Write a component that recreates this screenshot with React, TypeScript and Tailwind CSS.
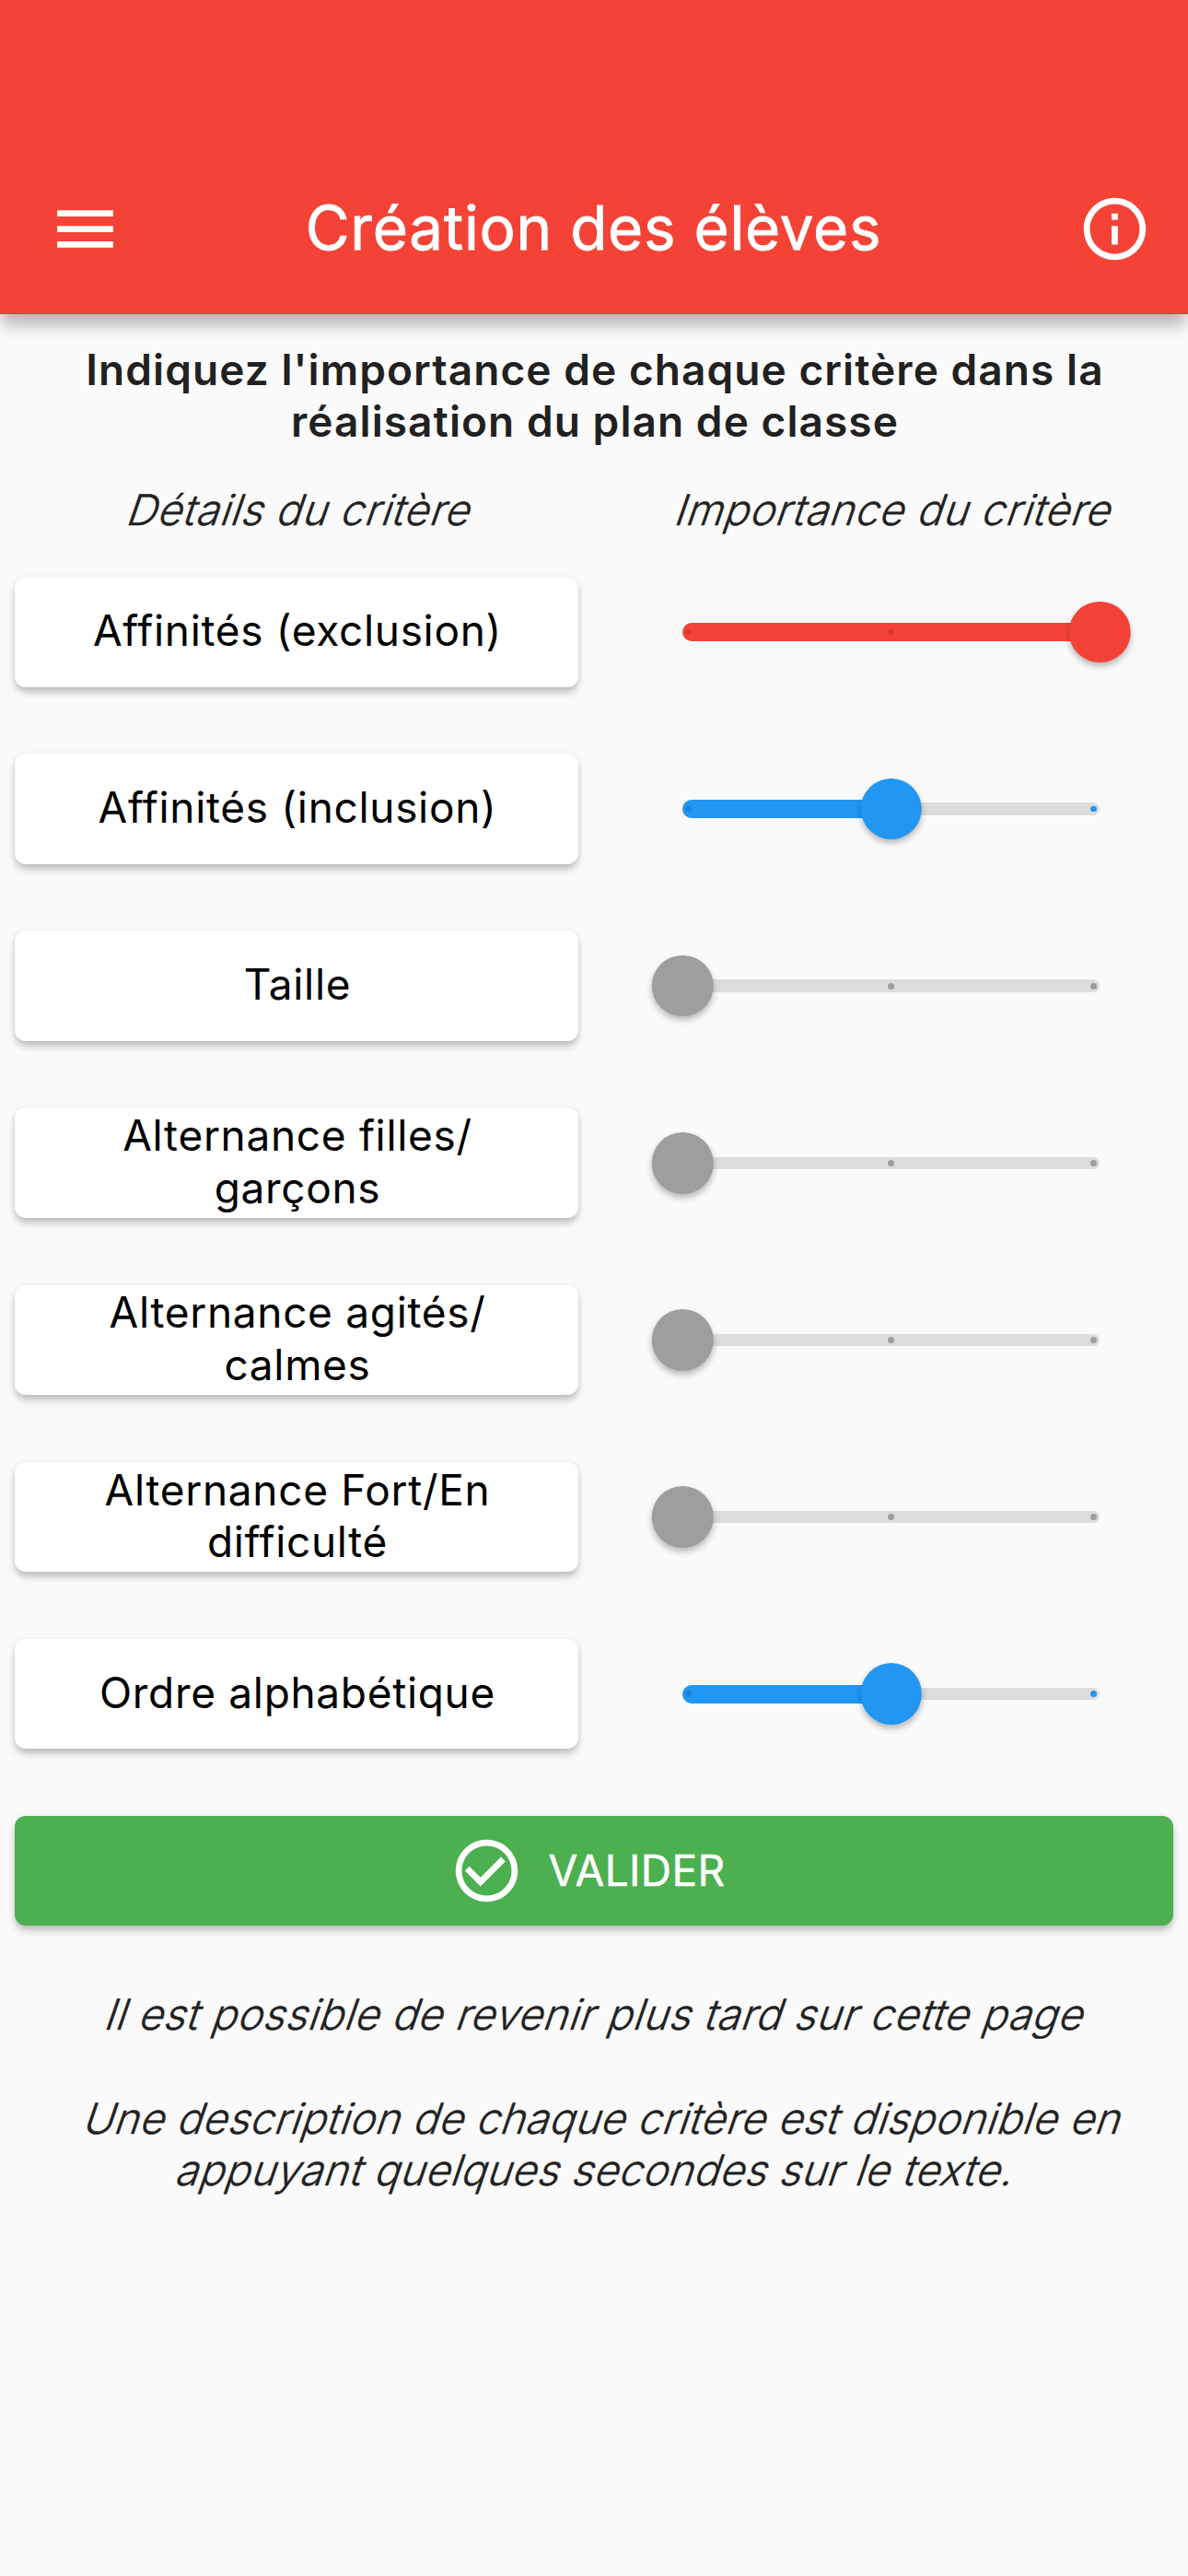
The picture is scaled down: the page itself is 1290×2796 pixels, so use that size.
import React from "react";

type Tone = "red" | "blue" | "grey";

interface Criterion {
  lines: string[];
  value: 0 | 1 | 2;
}

const criteria: Criterion[] = [
  { lines: ["Affinités (exclusion)"], value: 2 },
  { lines: ["Affinités (inclusion)"], value: 1 },
  { lines: ["Taille"], value: 0 },
  { lines: ["Alternance filles/", "garçons"], value: 0 },
  { lines: ["Alternance agités/", "calmes"], value: 0 },
  { lines: ["Alternance Fort/En", "difficulté"], value: 0 },
  { lines: ["Ordre alphabétique"], value: 1 },
];

const toneByValue: Record<number, Tone> = { 0: "grey", 1: "blue", 2: "red" };

const toneClass: Record<Tone, string> = {
  red: "bg-[#f44336]",
  blue: "bg-[#2196f3]",
  grey: "bg-[#9e9e9e]",
};

function MenuIcon() {
  return (
    <svg viewBox="0 0 24 24" className="size-[81px] fill-white">
      <path d="M3 18h18v-2H3v2zm0-5h18v-2H3v2zm0-7v2h18V6H3z" />
    </svg>
  );
}

function InfoIcon() {
  return (
    <svg viewBox="0 0 24 24" className="size-[81px] fill-white">
      <path d="M11 7h2v2h-2zm0 4h2v6h-2zm1-9C6.48 2 2 6.48 2 12s4.48 10 10 10 10-4.48 10-10S17.52 2 12 2zm0 18c-4.41 0-8-3.59-8-8s3.59-8 8-8 8 3.59 8 8-3.59 8-8 8z" />
    </svg>
  );
}

function CheckIcon() {
  return (
    <svg viewBox="0 0 24 24" className="size-[81px] fill-white">
      <path d="M16.59 7.58L10 14.17l-3.59-3.58L5 12l5 5 8-8zM12 2C6.48 2 2 6.48 2 12s4.48 10 10 10 10-4.48 10-10S17.52 2 12 2zm0 18c-4.42 0-8-3.58-8-8s3.58-8 8-8 8 3.58 8 8-3.58 8-8 8z" />
    </svg>
  );
}

/** One line of slanted text. */
function Slanted({ children }: { children: React.ReactNode }) {
  return (
    <span className="block h-[56.4px] -skew-x-[19deg] text-center text-[46px] leading-[56.4px] font-light whitespace-nowrap text-[#212121] [-webkit-text-stroke:0.4px_#212121] [font-feature-settings:'calt'_0]">
      {children}
    </span>
  );
}

function Slider({ value }: { value: number }) {
  const tone = toneClass[toneByValue[value]];
  const percent = value * 50;
  const tick = (index: number) =>
    index < value ? "bg-black/12" : tone;
  return (
    <div className="relative flex h-[68px] w-[453px] items-center">
      <div className="h-[13.5px] w-full rounded-full bg-[#dcdcdc]" />
      {value > 0 && (
        <div
          className={"absolute left-0 h-[20px] rounded-l-full " + tone}
          style={{ width: percent + "%" }}
        />
      )}
      <div className="absolute inset-x-[3.4px] flex justify-between">
        {[0, 1, 2].map((i) => (
          <span key={i} className={"size-[6.75px] rounded-full " + tick(i)} />
        ))}
      </div>
      <div
        className={
          "absolute size-[66.5px] -translate-x-1/2 rounded-full shadow-[0_4px_7px_rgba(0,0,0,0.28)] " + tone
        }
        style={{ left: percent + "%" }}
      />
    </div>
  );
}

export default function App() {
  return (
    <div className="flex h-[2796px] w-[1290px] flex-col overflow-hidden bg-[#fafafa] font-['Inter',sans-serif] [font-variant-ligatures:none]">
      <header className="z-10 flex h-[341px] shrink-0 items-end bg-[#f44336] pb-[52px] shadow-[0_14px_16px_-2px_rgba(0,0,0,0.27)]">
        <div className="flex h-[81px] w-full items-center justify-between pr-[39px] pl-[52px]">
          <MenuIcon />
          <h1 className="mr-[14px] pb-[2px] text-[65.5px] leading-[79px] font-normal tracking-[0.75px] text-white [-webkit-text-stroke:0.8px_white]">
            Création des élèves
          </h1>
          <InfoIcon />
        </div>
      </header>

      <main className="flex flex-col px-[16px] pt-[32px]">
        <p className="pl-[2px] text-center text-[46px] leading-[56.4px] font-semibold tracking-[1.07px] text-[#212121]">
          Indiquez l'importance de chaque critère dans la
          <br />
          réalisation du plan de classe
        </p>

        <div className="mt-[39px] flex pl-[4px] tracking-[0.68px]">
          <div className="w-[615px] shrink-0">
            <Slanted>Détails du critère</Slanted>
          </div>
          <div className="ml-[32px] w-[612px] shrink-0">
            <Slanted>Importance du critère</Slanted>
          </div>
        </div>

        <div className="mt-[45px] flex flex-col gap-[72.5px]">
          {criteria.map((c) => (
            <div key={c.lines[0]} className="flex h-[119.6px] items-center">
              <button className="flex h-full w-[612px] flex-col items-center justify-center rounded-[12px] bg-white pb-[3px] pl-[2px] text-[46px] leading-[56.4px] tracking-[0.68px] text-black shadow-[0_6px_8px_-1px_rgba(0,0,0,0.25),0_0_6px_rgba(0,0,0,0.06)]">
                {c.lines.map((line) => (
                  <span key={line} className="block whitespace-nowrap">
                    {line}
                  </span>
                ))}
              </button>
              <div className="ml-[113px]">
                <Slider value={c.value} />
              </div>
            </div>
          ))}
        </div>

        <button className="mt-[72.5px] flex h-[119.6px] items-center rounded-[12px] bg-[#4caf50] pl-[471.5px] shadow-[0_6px_8px_-1px_rgba(0,0,0,0.25),0_0_6px_rgba(0,0,0,0.06)]">
          <CheckIcon />
          <span className="ml-[27px] pb-px text-[46px] leading-[56.4px] font-normal tracking-[0.4px] text-white [-webkit-text-stroke:0.5px_white]">
            VALIDER
          </span>
        </button>

        <div className="mt-[68px] pl-[7px] tracking-[0.54px]">
          <Slanted>Il est possible de revenir plus tard sur cette page</Slanted>
        </div>
        <div className="mt-[56px] pl-[8px] tracking-[0.45px]">
          <div className="pl-[16px]">
            <Slanted>Une description de chaque critère est disponible en</Slanted>
          </div>
          <Slanted>appuyant quelques secondes sur le texte.</Slanted>
        </div>
      </main>
    </div>
  );
}
